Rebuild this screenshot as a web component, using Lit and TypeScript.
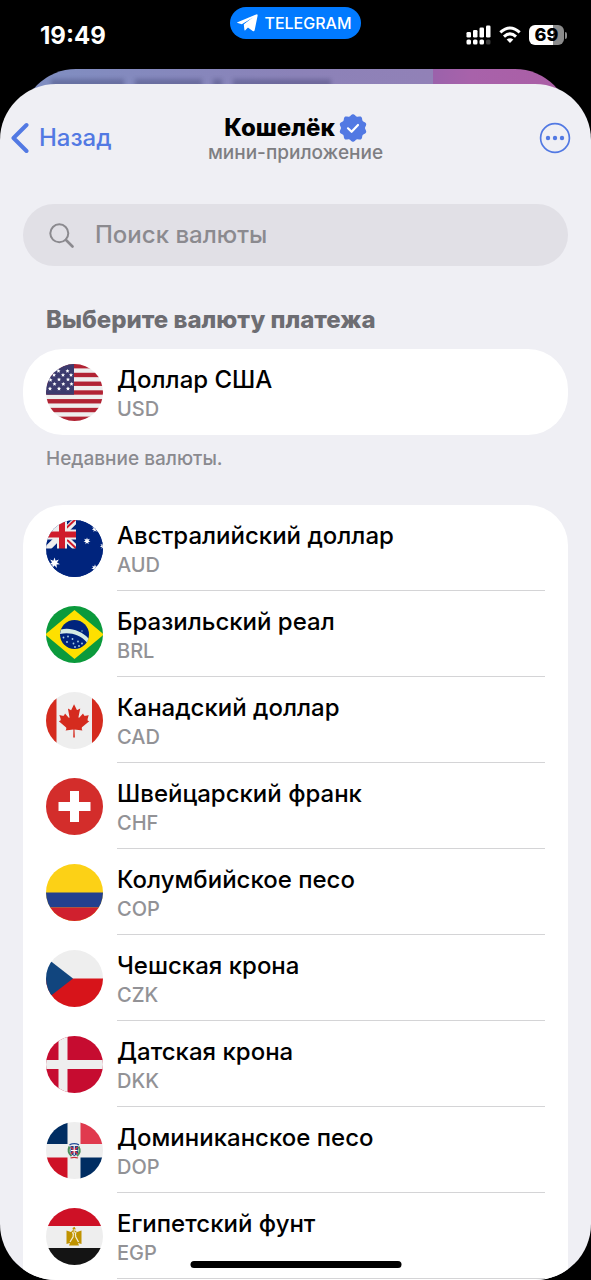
import { LitElement, html, svg, css, type SVGTemplateResult } from "lit";
import { customElement, property } from "lit/decorators.js";

interface Currency {
  code: string;
  name: string;
}

const RECENT: Currency[] = [{ code: "USD", name: "Доллар США" }];

const CURRENCIES: Currency[] = [
  { code: "AUD", name: "Австралийский доллар" },
  { code: "BRL", name: "Бразильский реал" },
  { code: "CAD", name: "Канадский доллар" },
  { code: "CHF", name: "Швейцарский франк" },
  { code: "COP", name: "Колумбийское песо" },
  { code: "CZK", name: "Чешская крона" },
  { code: "DKK", name: "Датская крона" },
  { code: "DOP", name: "Доминиканское песо" },
  { code: "EGP", name: "Египетский фунт" },
];

/** Points of a star polygon with the given number of spikes. */
function star(cx: number, cy: number, r: number, spikes = 5, inner = 0.42): string {
  const pts: string[] = [];
  for (let i = 0; i < spikes * 2; i++) {
    const rad = i % 2 ? r * inner : r;
    const a = -Math.PI / 2 + (i * Math.PI) / spikes;
    pts.push(`${(cx + rad * Math.cos(a)).toFixed(2)},${(cy + rad * Math.sin(a)).toFixed(2)}`);
  }
  return pts.join(" ");
}

/** Closed outline of a disc with soft scallops, used by the verified badge. */
function scallop(c: number, r: number, depth: number, bumps: number): string {
  const pts: string[] = [];
  for (let i = 0; i < 180; i++) {
    const a = (i * Math.PI) / 90 - Math.PI / 2;
    const rad = r + depth * Math.cos(bumps * a + (bumps * Math.PI) / 2);
    pts.push(`${(c + rad * Math.cos(a)).toFixed(2)} ${(c + rad * Math.sin(a)).toFixed(2)}`);
  }
  return `M${pts.join("L")}Z`;
}

const FLAGS: Record<string, SVGTemplateResult> = {
  USD: svg`
    <rect width="57" height="57" fill="#eeeeee"/>
    ${[0, 2, 4, 6, 8, 10, 12].map((i) => svg`<rect y=${i * 4.385} width="57" height="4.385" fill="#b22334"/>`)}
    <rect width="28" height="30.7" fill="#3c3b6e"/>
    ${[
      [21.5, 7], [12.5, 7], [17, 11], [8, 11], [25, 11], [13, 15.5], [22, 15.5], [4.5, 16],
      [8.5, 20], [17.3, 20], [25.5, 20], [4, 24.7], [13, 24.7], [22, 24.7],
    ].map(([x, y]) => svg`<polygon points=${star(x, y, 2.1, 5, 0.5)} fill="#fff"/>`)}`,
  AUD: svg`
    <rect width="57" height="57" fill="#00247d"/>
    <path d="M-2 -3L34 32M33 -3L-2 32" stroke="#eee" stroke-width="6"/>
    <path d="M17 16L34 32M15 13L32 -3" stroke="#cf1b2b" stroke-width="2"/>
    <path d="M0 14.5H31M16 0V29" stroke="#eee" stroke-width="10"/>
    <path d="M0 14.5H31M16 0V29" stroke="#cf1b2b" stroke-width="6"/>
    <path d="M30 0V28.5H0V57H57V0Z" fill="#00247d"/>
    <polygon points=${star(8.5, 43, 5.6, 7, 0.46)} fill="#fff"/>
    <polygon points=${star(41, 21, 3.6, 7, 0.46)} fill="#fff"/>
    <polygon points=${star(49, 9, 3.4, 7, 0.46)} fill="#fff"/>
    <polygon points=${star(57, 26, 3.2, 7, 0.46)} fill="#fff"/>
    <polygon points=${star(49, 48, 3.8, 7, 0.46)} fill="#fff"/>`,
  BRL: svg`
    <rect width="57" height="57" fill="#0b9a3c"/>
    <path d="M28.5 4L58 28.5L28.5 53L-1 28.5Z" fill="#fee000"/>
    <circle cx="28.5" cy="28.5" r="14.5" fill="#00247d"/>
    <path d="M15 23.500C24 21 36 25 42.500 32.500L41 36.500C34 28.500 24 26 14 28Z" fill="#d5ebe4"/>
    ${[[17.5, 31.5], [22, 30.5], [21, 36], [26.5, 33], [27.5, 37.5], [32, 35.5], [36, 37.5], [33, 40], [29, 41]].map(
      ([x, y]) => svg`<circle cx=${x} cy=${y} r="0.9" fill="#a9d0ea"/>`,
    )}
    <circle cx="36" cy="25" r="0.7" fill="#a9d0ea"/>`,
  CAD: svg`
    <rect width="57" height="57" fill="#eeeeee"/>
    <path d="M0 0H10.5V57H0ZM46 0H57V57H46Z" fill="#d52b1e"/>
    <path transform="translate(-9.5 1) scale(0.119)" fill="#d52b1e" d="m201 232-13.3 4.4 61.4 54c4.7 13.7-1.6 17.8-5.6 25l66.6-8.4-1.6 67 13.9-.3-3.1-66.6 66.7 8c-4.1-8.7-7.8-13.3-4-27.2l61.3-51-10.7-4c-8.8-6.8 3.8-32.6 5.6-48.9 0 0-35.7 12.3-38 5.8l-9.2-17.5-32.6 35.8c-3.5.9-5-.5-5.9-3.5l15-74.8-23.8 13.4q-3.2 1.3-5.2-2.2l-23-46-23.6 47.8q-2.8 2.5-5 .7L264 130.8l13.7 74.1c-1.1 3-3.7 3.8-6.7 2.2l-31.2-35.3c-4 6.5-6.8 17.1-12.2 19.5s-23.5-4.5-35.6-7c4.2 14.8 17 39.6 9 47.7"/>`,
  CHF: svg`
    <rect width="57" height="57" fill="#d32d2b"/>
    <path d="M24 13H33V24H44.5V33H33V44H24V33H12.5V24H24Z" fill="#fff"/>`,
  COP: svg`
    <rect width="57" height="57" fill="#fcd116"/>
    <rect y="28.5" width="57" height="15" fill="#24408e"/>
    <rect y="43.5" width="57" height="14" fill="#d0202e"/>`,
  CZK: svg`
    <rect width="57" height="57" fill="#eeeeee"/>
    <rect y="28.5" width="57" height="28.5" fill="#d7141a"/>
    <path d="M-11 -1L27 28.5L-11 58Z" fill="#11457e"/>`,
  DKK: svg`
    <rect width="57" height="57" fill="#c60c30"/>
    <path d="M0 28.5H57M17 0V57" stroke="#eeeeee" stroke-width="9"/>`,
  DOP: svg`
    <rect width="57" height="57" fill="#eeeeee"/>
    <path d="M0 0H21.5V22H0ZM34.5 35.5H57V57H34.5Z" fill="#002d62"/>
    <path d="M34.5 0H57V22H34.5Z" fill="#e03a4e"/>
    <path d="M0 35.5H21.5V57H0Z" fill="#ce1126"/>
    <path d="M23.5 24.5Q21 30 25.5 34M32.500 24.5Q35.500 30 31 34" fill="none" stroke="#4a8f5a" stroke-width="2"/>
    <path d="M24.5 24H32V31Q31 33 28.2 34Q25.5 33 24.5 31Z" fill="#1f3f86"/>
    <path d="M25 25L31.5 32M31.5 25L25 32" stroke="#d9303e" stroke-width="1.4"/>
    <path d="M28.2 24V33M25 28.5H31.500" stroke="#fff" stroke-width="1.1"/>
    <path d="M23.5 22.8Q28.2 20.5 33 22.8" fill="none" stroke="#27509b" stroke-width="1.3"/>
    <path d="M24.5 36Q28.2 34.600 32 36" fill="none" stroke="#c8323c" stroke-width="1.3"/>`,
  EGP: svg`
    <rect width="57" height="57" fill="#eeeeee"/>
    <rect width="57" height="18" fill="#ce1126"/>
    <rect y="40" width="57" height="17" fill="#141414"/>
    <path d="M20.5 22.5L25 24L27 22L26.5 20L28.5 18.8L29.5 20.5L29 22.5L31 24L35.5 22.5V36L32 35L33 37.5H23L24 35L20.5 36Z" fill="#c09300"/>
    <path d="M26.5 24Q28 26 27 29L24 34M30 24Q28.800 26 29.800 29L32.500 34" fill="none" stroke="#f3ecd2" stroke-width="1.3"/>
    <path d="M28.2 21V25" stroke="#f3ecd2" stroke-width="1"/>`,
};

@customElement("currency-row")
export class CurrencyRow extends LitElement {
  @property({ attribute: false }) currency!: Currency;
  @property({ type: Boolean, reflect: true }) divided = false;

  static styles = css`
    :host {
      display: block;
    }
    .row {
      box-sizing: border-box;
      display: flex;
      align-items: center;
      gap: 14px;
      width: 100%;
      height: 86px;
      margin: 0;
      padding: 0 23px;
      border: 0;
      background: none;
      font: inherit;
      color: inherit;
      text-align: left;
      cursor: pointer;
    }
    .flag {
      flex: none;
      width: 57px;
      height: 57px;
      border-radius: 50%;
    }
    .body {
      box-sizing: border-box;
      flex: 1;
      min-width: 0;
      height: 100%;
      display: flex;
      flex-direction: column;
      justify-content: center;
      padding-top: 5px;
      border-bottom: 1px solid transparent;
    }
    :host([divided]) .body {
      border-bottom-color: #d4d4d6;
    }
    .name {
      font-size: 24px;
      line-height: 30px;
      font-weight: 500;
      color: #000;
    }
    .code {
      font-size: 20px;
      line-height: 28px;
      font-weight: 500;
      color: #929296;
    }
  `;

  render() {
    const { code, name } = this.currency;
    return html`
      <button class="row" type="button">
        <svg class="flag" viewBox="0 0 57 57" aria-hidden="true">${FLAGS[code]}</svg>
        <span class="body">
          <span class="name">${name}</span>
          <span class="code">${code}</span>
        </span>
      </button>
    `;
  }
}

@customElement("status-bar")
export class StatusBar extends LitElement {
  static styles = css`
    :host {
      display: grid;
      grid-template-columns: 1fr auto 1fr;
      height: 69px;
      box-sizing: border-box;
      padding: 7px 24px 0;
      color: #fff;
    }
    .time {
      padding: 14px 0 0 16px;
      font-size: 24px;
      line-height: 30px;
      font-weight: 700;
    }
    .pill {
      display: flex;
      align-items: center;
      gap: 6px;
      height: 32px;
      padding: 0 9px 0 7px;
      border-radius: 16px;
      background: #017aff;
      font-size: 16px;
      font-weight: 500;
      color: #fff;
      text-decoration: none;
    }
    .icons {
      display: flex;
      justify-content: flex-end;
      align-items: center;
      gap: 8px;
      height: 20px;
      padding-top: 18px;
    }
    .battery {
      display: flex;
      align-items: center;
      gap: 1px;
    }
    .level {
      width: 35px;
      height: 20px;
      border-radius: 6px;
      background: linear-gradient(90deg, #fff 69%, #8b8b8b 69%);
      color: #000;
      font-size: 18px;
      line-height: 20px;
      font-weight: 800;
      text-align: center;
    }
    .cap {
      width: 2px;
      height: 7px;
      border-radius: 0 2px 2px 0;
      background: #8b8b8b;
    }
  `;

  render() {
    return html`
      <span class="time">19:49</span>
      <a class="pill" href="#telegram">
        <svg width="21" height="18" viewBox="0 0 21 18" aria-hidden="true">
          <path d="M0.5 8.3L19.3 0.4Q20.9 0 20.6 1.8L17.7 16Q17.2 17.8 15.7 16.9L6.8 10.6L16 3.4L4.8 10.2L0.7 9.1Q-0.3 8.700 0.5 8.3Z" fill="#fff"/>
          <path d="M6.800 10.600L16 3.4L10.500 9.700L11 13.600L8.300 16.200Q7.500 16.800 7.400 15.800Z" fill="#fff"/>
        </svg>
        TELEGRAM
      </a>
      <div class="icons">
        <svg width="25" height="20" viewBox="0 0 25 20" fill="#fff" aria-label="Сигнал">
          <rect x="0.5" y="7" width="4.5" height="5.5" rx="1.3"/>
          <rect x="7" y="5" width="4.5" height="7.5" rx="1.3"/>
          <rect x="13.5" y="2.5" width="4.5" height="10" rx="1.3"/>
          <rect x="20" y="0.5" width="4.5" height="12" rx="1.3"/>
          <rect x="0.5" y="14.5" width="4.5" height="5" rx="1.5"/>
          <rect x="7" y="14.5" width="4.5" height="5" rx="1.5"/>
          <rect x="13.5" y="14.5" width="4.5" height="5" rx="1.5"/>
          <rect x="20" y="14.5" width="4.5" height="5" rx="1.5" fill="#3a3a3a"/>
        </svg>
        <svg width="22" height="18" viewBox="0 0 23 18" fill="none" stroke="#fff" stroke-width="3.2" aria-label="Wi-Fi">
          <path d="M1.4 6.3Q11.5 -2.9 21.6 6.3"/>
          <path d="M5.2 10.6Q11.5 5 17.8 10.6"/>
          <path d="M11.5 17.3L8 13.8Q11.5 11 15 13.8Z" fill="#fff" stroke="none"/>
        </svg>
        <span class="battery"><span class="level">69</span><span class="cap"></span></span>
      </div>
    `;
  }
}

@customElement("app-root")
export class AppRoot extends LitElement {
  static styles = css`
    :host {
      position: relative;
      display: flex;
      flex-direction: column;
      height: 100vh;
      overflow: hidden;
      background: #000;
      font-family: Inter, "Liberation Sans", sans-serif;
    }
    .behind {
      flex: none;
      box-sizing: border-box;
      height: 60px;
      margin: 0 21px -45px;
      padding: 10px 0 0 30px;
      overflow: hidden;
      border-radius: 55px 55px 0 0;
      background:
        linear-gradient(90deg, transparent 75%, #9b62ab 75%, #a862aa 82%, #ab5ea5 100%),
        linear-gradient(90deg, #7f8fc2, #8b82b8 50%, #9880b6);
    }
    .smudge {
      width: 280px;
      height: 12px;
      filter: blur(2px);
      opacity: 0.3;
      background: linear-gradient(
        90deg,
        #2c2f5c 26%, transparent 26%, transparent 30%,
        #2c2f5c 30%, #2c2f5c 54%, transparent 54%, transparent 58%,
        #2c2f5c 58%, #2c2f5c 61%, transparent 61%, transparent 65%,
        #2c2f5c 65%
      );
    }
    .sheet {
      position: relative;
      flex: 1;
      min-height: 0;
      display: flex;
      flex-direction: column;
      overflow: hidden;
      border-radius: 56px;
      background: #efeff4;
    }
    .nav {
      flex: none;
      display: grid;
      grid-template-columns: 1fr auto 1fr;
      align-items: center;
      height: 108px;
      padding: 0 11px;
    }
    .back,
    .more {
      display: flex;
      align-items: center;
      padding: 0;
      border: 0;
      background: none;
      font: inherit;
      color: #5279e3;
      cursor: pointer;
    }
    .back {
      justify-self: start;
      gap: 10px;
      font-size: 24px;
      line-height: 30px;
      font-weight: 500;
    }
    .more {
      justify-self: end;
      margin-right: 9px;
    }
    .heading {
      display: flex;
      flex-direction: column;
      align-items: center;
      padding-top: 2px;
    }
    .title {
      display: flex;
      align-items: center;
      gap: 4px;
      margin: 0;
      font-size: 24px;
      line-height: 28px;
      font-weight: 800;
      color: #000;
    }
    .subtitle {
      font-size: 19px;
      line-height: 22px;
      font-weight: 500;
      color: #7e7e82;
    }
    .content {
      flex: 1;
      min-height: 0;
      overflow-y: auto;
      scrollbar-width: none;
      padding: 12px 23px 0;
    }
    .search {
      display: flex;
      align-items: center;
      gap: 21px;
      height: 62px;
      padding: 0 26px;
      border-radius: 31px;
      background: #e1e0e6;
      color: #8b8a8f;
    }
    .search svg {
      flex: none;
    }
    .field {
      flex: 1;
      min-width: 0;
      padding: 0;
      border: 0;
      outline: 0;
      background: none;
      font: inherit;
      font-size: 24px;
      line-height: 30px;
      font-weight: 500;
      color: #000;
    }
    .field::placeholder {
      color: #8b8a8f;
      opacity: 1;
    }
    .section {
      margin: 39px 23px 14px;
      font-size: 24px;
      line-height: 30px;
      font-weight: 800;
      color: #6d6d72;
    }
    .card {
      border-radius: 40px;
      background: #fff;
    }
    .note {
      margin: 12px 23px 34px;
      font-size: 19px;
      line-height: 24px;
      font-weight: 500;
      color: #8a8a8f;
    }
    .list {
      border-radius: 40px 40px 0 0;
      padding-bottom: 34px;
    }
    .home {
      position: absolute;
      left: 50%;
      bottom: 12px;
      width: 211px;
      height: 7px;
      border-radius: 4px;
      background: #000;
      transform: translateX(-50%);
    }
  `;

  render() {
    return html`
      <status-bar></status-bar>
      <div class="behind"><div class="smudge"></div></div>
      <main class="sheet">
        <header class="nav">
          <button class="back" type="button">
            <svg width="18" height="32" viewBox="0 0 18 32" fill="none" stroke="currentColor" stroke-width="4" stroke-linecap="round" stroke-linejoin="round" aria-hidden="true">
              <path d="M15.5 3L2.5 16L15.5 29"/>
            </svg>
            Назад
          </button>
          <div class="heading">
            <h1 class="title">
              Кошелёк
              <svg width="28" height="28" viewBox="0 0 28 28" aria-label="Подтверждено">
                <path d=${scallop(14, 12.9, 0.9, 10)} fill="#5279e3"/>
                <path d="M9 14.3L12.6 17.8L19 11" fill="none" stroke="#fff" stroke-width="2.2" stroke-linecap="round" stroke-linejoin="round"/>
              </svg>
            </h1>
            <span class="subtitle">мини-приложение</span>
          </div>
          <button class="more" type="button" aria-label="Меню">
            <svg width="32" height="32" viewBox="0 0 32 32" aria-hidden="true">
              <circle cx="16" cy="16" r="14.4" fill="none" stroke="currentColor" stroke-width="1.7"/>
              <g fill="currentColor"><circle cx="9" cy="16" r="2.2"/><circle cx="16" cy="16" r="2.2"/><circle cx="23" cy="16" r="2.2"/></g>
            </svg>
          </button>
        </header>
        <div class="content">
          <label class="search">
            <svg width="25" height="25" viewBox="0 0 25 25" fill="none" stroke="currentColor" aria-hidden="true">
              <circle cx="10.3" cy="10.3" r="9" stroke-width="2"/>
              <path d="M17 17L23.5 23.5" stroke-width="2.6" stroke-linecap="round"/>
            </svg>
            <input class="field" type="text" placeholder="Поиск валюты" aria-label="Поиск валюты" />
          </label>
          <h2 class="section">Выберите валюту платежа</h2>
          <div class="card">
            ${RECENT.map((c) => html`<currency-row .currency=${c}></currency-row>`)}
          </div>
          <p class="note">Недавние валюты.</p>
          <div class="card list">
            ${CURRENCIES.map((c) => html`<currency-row .currency=${c} divided></currency-row>`)}
          </div>
        </div>
      </main>
      <div class="home"></div>
    `;
  }
}
